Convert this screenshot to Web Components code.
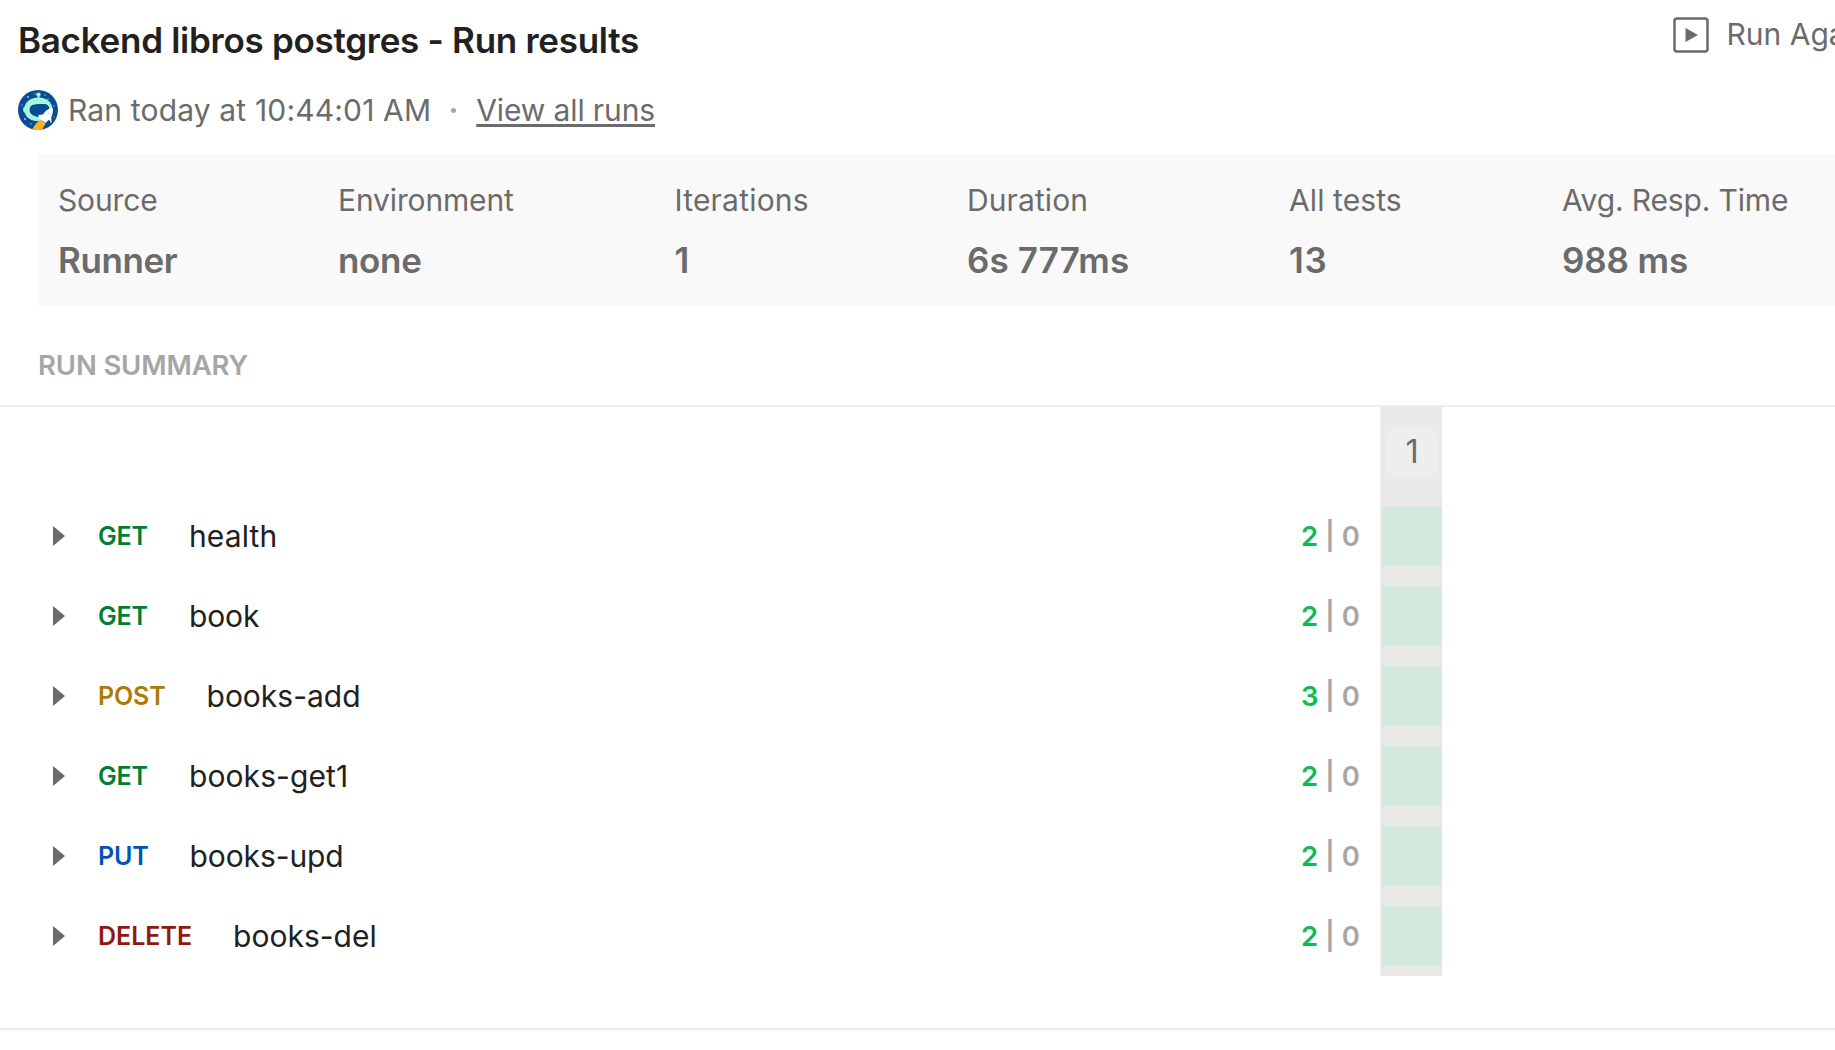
<!DOCTYPE html>
<html lang="en">
<head>
<meta charset="utf-8">
<title>Run results</title>
<style>
  html { overflow: hidden; }
  body {
    margin: 0; background: #fff; overflow: hidden;
    font-family: Inter, "Liberation Sans", sans-serif; color: #212121;
  }
</style>
</head>
<body>
<run-results></run-results>
<script>
const define = (name, html, setup) => customElements.define(name, class extends HTMLElement {
  connectedCallback() {
    if (this.shadowRoot) return;
    const t = document.createElement('template');
    t.innerHTML = html;
    this.attachShadow({ mode: 'open' }).append(t.content.cloneNode(true));
    if (setup) setup(this, this.shadowRoot);
  }
});

define('user-avatar', `
<style>:host{display:block;width:40px;height:40px;flex:none} svg{display:block}</style>
<svg width="40" height="40" viewBox="0 0 40 40">
  <defs><clipPath id="c"><circle cx="20" cy="20" r="20"/></clipPath></defs>
  <g clip-path="url(#c)">
    <rect width="40" height="40" fill="#0a4c93"/>
    <g fill="#9cc7e6">
      <circle cx="10" cy="7" r="1"/><circle cx="17" cy="4" r=".7"/><circle cx="27" cy="5" r=".8"/><circle cx="30" cy="9" r=".8"/>
      <circle cx="4" cy="15" r=".7"/><circle cx="7" cy="29" r="1"/><circle cx="13" cy="34" r=".7"/><circle cx="36" cy="16" r=".7"/>
      <circle cx="33" cy="32" r=".9"/><circle cx="36" cy="27" r=".6"/><circle cx="12" cy="10" r=".5"/>
    </g>
    <circle cx="20.5" cy="4.6" r="2.2" fill="#a6f7e0"/>
    <rect x="19.8" y="5" width="1.5" height="4" fill="#a6f7e0"/>
    <path d="M20.500 7.500C29 7.500 34.500 12.500 34.500 19.500C34.500 27 28.500 31 20.500 31C16.500 31 13.500 30.500 11 28.500C8.500 27 7.500 24.500 6.500 22.500C4.800 22 4.500 17.500 6.500 16.800C8 11.500 13 7.500 20.500 7.500Z" fill="#a6f7e0"/>
    <path d="M12 17.500C13.200 14.300 17 14.300 21.500 14C26 13.800 30 13.500 31 17C32 21 29.500 25.500 24.500 27C18.500 28 9.500 25 12 17.500Z" fill="#0a4c93"/>
    <path d="M34.500 17.500C35.500 21.500 34.500 24.500 33.300 27L33.500 31.500L30.500 30L27.500 33L21 28L20.300 25L25 24.500C27 21 30.500 18.500 34.500 17.500Z" fill="#fff"/>
    <circle cx="30.500" cy="23" r="1" fill="#c7d9ea"/>
    <path d="M22.500 29.500L27.500 33.500C26 36 25 38 24.500 40.500H13C15.500 38 17.500 33 22.500 29.500Z" fill="#ffae2b"/>
  </g>
</svg>`);

define('run-again', `
<style>
  :host{display:flex;gap:17.500px;width:162px;height:40px;overflow:hidden;white-space:nowrap;font-size:30px;line-height:40px;color:#6b6b6b}
  svg{display:block;flex:none;margin-top:3px}
</style>
<svg width="36" height="36" viewBox="0 0 36 36"><rect x="1.500" y="1.500" width="33" height="33" rx="2.500" fill="none" stroke="#6b6b6b" stroke-width="2.500"/><path d="M12.500 11L25 18L12.500 25Z" fill="#6b6b6b"/></svg>
<span><slot></slot></span>`);

define('run-header', `
<style>
  :host{display:flex;justify-content:space-between;align-items:flex-start;height:155px;box-sizing:border-box;padding-left:18px}
  .main{display:flex;flex-direction:column;gap:30px;padding-top:20px}
  h1{margin:0;font-size:35px;font-weight:600;line-height:40px;letter-spacing:-.28px}
  .sub{display:flex;align-items:center;font-size:30px;line-height:40px;color:#6b6b6b;white-space:nowrap}
  .ran{margin-left:10px;letter-spacing:.16px}
  .dot{width:5px;height:5px;border-radius:50%;background:#a6a6a6;margin:0 20.500px 0 19.500px}
  a{color:inherit;letter-spacing:-.12px;text-decoration:underline;text-decoration-thickness:2.500px;text-underline-offset:2.500px;text-decoration-skip-ink:none}
  run-again{margin-top:14px}
</style>
<div class="main">
  <h1>Backend libros postgres - Run results</h1>
  <div class="sub"><user-avatar></user-avatar><span class="ran">Ran today at 10:44:01 AM</span><span class="dot"></span><a>View all runs</a></div>
</div>
<run-again>Run Again</run-again>`);

define('run-stat', `
<style>
  :host{display:flex;flex-direction:column;gap:15px;color:#6b6b6b;white-space:nowrap}
  .l{font-size:30px;line-height:40px;letter-spacing:var(--l,-.14px)}
  .v{font-size:35px;line-height:50px;font-weight:600;letter-spacing:var(--v,-.1px)}
</style>
<span class="l"><slot name="label"></slot></span><span class="v"><slot></slot></span>`);

define('run-stats', `
<style>
  :host{display:grid;grid-template-columns:280px 336.500px 292.500px 322px 273px 1fr;margin-left:38px;height:150px;box-sizing:border-box;padding:25px 0 20px 20px;background:#f9f9f9}
</style><slot></slot>`);

define('iteration-badge', `
<style>:host{display:block;width:50px;height:50px;border-radius:10px;background:#eee;color:#6b6b6b;font-size:32.500px;line-height:50px;text-align:center}</style><slot></slot>`);

define('request-row', `
<style>
  :host{display:flex;height:80px;align-items:stretch}
  .info{display:flex;align-items:center;width:1380px;box-sizing:border-box;padding:0 20px 0 53px;line-height:40px}
  .tri{width:0;height:0;border-left:12.500px solid #6b6b6b;border-top:10px solid transparent;border-bottom:10px solid transparent;margin-right:33px}
  .m{font-size:25px;font-weight:600;letter-spacing:var(--m,-.15px);margin-right:41px}
  .n{font-size:30px;flex:1;letter-spacing:var(--n,0)}
  .c{display:flex;font-size:27.500px;font-weight:600;color:#a6a6a6}
  .p{color:#0cbb52;width:17px}
  .s{margin:0 7px}
  .cell{width:60px;border-left:2px solid #ededed;background:#e8e8e8;padding:var(--top,10px) 0 10px;display:flex}
  .cell i{flex:1;background:#d3e9dc}
</style>
<div class="info"><span class="tri"></span><span class="m"></span><span class="n"><slot></slot></span><span class="c"><span class="p"></span><span class="s">|</span><span class="f">0</span></span></div>
<div class="cell"><i></i></div>`, (el, r) => {
  const colors = { GET: '#007f31', POST: '#ad7a03', PUT: '#0053b8', DELETE: '#8e1a10' };
  const m = r.querySelector('.m');
  m.textContent = el.getAttribute('method');
  m.style.color = colors[el.getAttribute('method')];
  r.querySelector('.p').textContent = el.getAttribute('passed');
});

define('run-summary', `
<style>
  :host{display:block}
  h2{margin:40px 0 20px 38px;font-size:27.500px;font-weight:600;line-height:40px;letter-spacing:-.15px;color:#a6a6a6}
  .table{border-top:2px solid #ededed;border-bottom:2px solid #ededed;padding-bottom:52px}
  .head{display:flex;height:89px;padding-left:1380px}
  .col{width:60px;border-left:2px solid #ededed;background:#e9e9e9;display:flex;justify-content:center;align-items:flex-start;padding-top:20px}
</style>
<h2>RUN SUMMARY</h2>
<div class="table"><div class="head"><div class="col"><iteration-badge>1</iteration-badge></div></div><slot></slot></div>`);

define('run-results', `
<style>:host{display:block;width:1835px;height:1050px;overflow:hidden}</style>
<run-header></run-header>
<run-stats>
  <run-stat style="--v:-.4px"><span slot="label">Source</span>Runner</run-stat>
  <run-stat style="--v:-.3px"><span slot="label">Environment</span>none</run-stat>
  <run-stat style="--l:.2px"><span slot="label">Iterations</span>1</run-stat>
  <run-stat style="--l:.1px;--v:.14px"><span slot="label">Duration</span>6s 777ms</run-stat>
  <run-stat style="--l:.1px;--v:.6px"><span slot="label">All tests</span>13</run-stat>
  <run-stat><span slot="label">Avg. Resp. Time</span>988 ms</run-stat>
</run-stats>
<run-summary>
  <request-row method="GET" passed="2" style="--top:11px;--n:.15px">health</request-row>
  <request-row method="GET" passed="2" style="--n:-.1px">book</request-row>
  <request-row method="POST" passed="3">books-add</request-row>
  <request-row method="GET" passed="2" style="--n:.1px">books-get1</request-row>
  <request-row method="PUT" passed="2" style="--n:-.1px">books-upd</request-row>
  <request-row method="DELETE" passed="2" style="--m:0px">books-del</request-row>
</run-summary>`);
</script>
</body>
</html>
